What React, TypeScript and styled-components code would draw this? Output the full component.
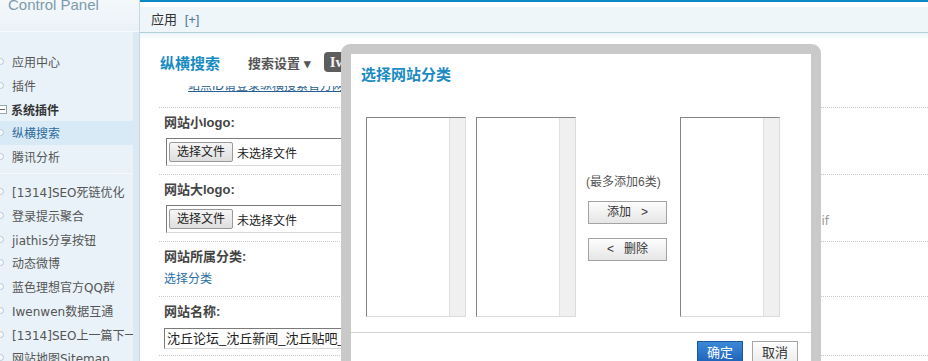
import React from 'react'
import styled, { createGlobalStyle } from 'styled-components'

type NavEntry = {
  label: string
  kind?: 'dot' | 'group'
  active?: boolean
}

const topNav: NavEntry[] = [
  { label: '应用中心' },
  { label: '插件' },
  { label: '系统插件', kind: 'group' },
  { label: '纵横搜索', active: true },
  { label: '腾讯分析' },
]

const pluginNav: NavEntry[] = [
  { label: '[1314]SEO死链优化' },
  { label: '登录提示聚合' },
  { label: 'jiathis分享按钮' },
  { label: '动态微博' },
  { label: '蓝色理想官方QQ群' },
  { label: 'Iwenwen数据互通' },
  { label: '[1314]SEO上一篇下一篇' },
  { label: '网站地图Sitemap' },
]

const NavRow: React.FC<{ entry: NavEntry }> = ({ entry }) => (
  <NavItem $active={entry.active} $bold={entry.kind === 'group'}>
    {entry.kind === 'group' ? <GroupIcon /> : <Dot />}
    {entry.label}
  </NavItem>
)

const FileField: React.FC = () => (
  <FileBox>
    <PickButton>选择文件</PickButton>
    <FileName>未选择文件</FileName>
  </FileBox>
)

export default function App() {
  return (
    <>
      <GlobalStyle />
      <Page>
        <Sidebar>
          <SideHead>
            <Brand>Control Panel</Brand>
          </SideHead>
          <SideBody>
            {topNav.map((n) => (
              <NavRow key={n.label} entry={n} />
            ))}
            <NavSeparator />
            {pluginNav.map((n) => (
              <NavRow key={n.label} entry={n} />
            ))}
          </SideBody>
        </Sidebar>

        <Main>
          <TopBar>
            <TabStrip>
              应用 <AddLink>[+]</AddLink>
            </TabStrip>
          </TopBar>
          <Content>
            <TitleRow>
              <PageTitle>纵横搜索</PageTitle>
              <MenuLabel>搜索设置 ▾</MenuLabel>
              <DarkTab>Iwenwen数据互通</DarkTab>
            </TitleRow>
            <Form>
              <ClipSection>
                <Clip>
                  <HelpLink>站点ID请登录纵横搜索官方网站注册后获取并填写</HelpLink>
                </Clip>
              </ClipSection>

              <Row>
                <Label>网站小logo:</Label>
                <FieldLine $gap={6}>
                  <FileField />
                </FieldLine>
              </Row>

              <Row>
                <Label>网站大logo:</Label>
                <FieldLine $gap={6}>
                  <FileField />
                  <Hint>图片格式支持 jpg, png, gif</Hint>
                </FieldLine>
              </Row>

              <Row>
                <Label>网站所属分类:</Label>
                <FieldLine $gap={4}>
                  <PlainLink>选择分类</PlainLink>
                </FieldLine>
              </Row>

              <Row $pb={6}>
                <Label>网站名称:</Label>
                <FieldLine $gap={7}>
                  <TextBox>沈丘论坛_沈丘新闻_沈丘贴吧_沈丘信息网</TextBox>
                </FieldLine>
              </Row>
            </Form>
          </Content>
        </Main>

        <Dialog>
          <DialogTitle>选择网站分类</DialogTitle>
          <DialogBody>
            <ListBox />
            <ListBox $gap={10} />
            <MidCol>
              <MidHint>(最多添加6类)</MidHint>
              <MoveButton $top={10}>{'添加   >'}</MoveButton>
              <MoveButton $top={14}>{'<   删除'}</MoveButton>
            </MidCol>
            <ListBox />
          </DialogBody>
          <DialogFooter>
            <FootButton $primary>确定</FootButton>
            <FootButton>取消</FootButton>
          </DialogFooter>
        </Dialog>
      </Page>
    </>
  )
}

const GlobalStyle = createGlobalStyle`
  html, body {
    margin: 0;
    padding: 0;
    background: #fff;
  }
  body {
    font-family: "Liberation Sans", "Noto Sans CJK SC", sans-serif;
    font-size: 12px;
    color: #333;
  }
`

const Page = styled.div({
  position: 'relative',
  display: 'flex',
  width: '100%',
  height: '361px',
  overflow: 'hidden',
})

/* sidebar */

const Sidebar = styled.aside({
  width: '140px',
  flexShrink: 0,
  display: 'flex',
  flexDirection: 'column',
  borderRight: '1px solid #c7d9e5',
  boxSizing: 'border-box',
  background: '#e9f2f9',
})

const SideHead = styled.div({
  flexShrink: 0,
  height: '31px',
  borderBottom: '1px solid #f8fbfd',
  background: 'linear-gradient(#f4f8fb, #ebf2f7)',
  overflow: 'hidden',
})

const Brand = styled.div({
  marginTop: '-3px',
  paddingLeft: '8px',
  fontSize: '15px',
  lineHeight: '15px',
  color: '#7d9bad',
})

const SideBody = styled.nav({
  flex: 1,
  minHeight: 0,
  paddingTop: '18px',
  borderRight: '6px solid #dce9f3',
})

const NavItem = styled.div<{ $active?: boolean; $bold?: boolean }>((p) => ({
  display: 'flex',
  alignItems: 'center',
  height: '23.7px',
  flexShrink: 0,
  whiteSpace: 'nowrap',
  overflow: 'hidden',
  fontFamily: '"DejaVu Sans", "Noto Sans CJK SC", sans-serif',
  fontSize: '12px',
  fontWeight: p.$bold ? 'bold' : 'normal',
  color: p.$active ? '#2d6b9c' : p.$bold ? '#333' : '#555',
  background: p.$active ? '#d9eaf7' : 'transparent',
}))

const Dot = styled.span({
  flexShrink: 0,
  width: '5px',
  height: '5px',
  marginLeft: '-3px',
  marginRight: '8px',
  borderRadius: '50%',
  border: '1px solid #b9c9d5',
  background: '#f4f8fb',
})

const GroupIcon = styled.span({
  position: 'relative',
  flexShrink: 0,
  width: '7px',
  height: '7px',
  marginLeft: '-2px',
  marginRight: '4px',
  border: '1px solid #9aa6ae',
  background: '#fff',
  '&::after': {
    content: '""',
    position: 'absolute',
    left: '1px',
    right: '1px',
    top: '3px',
    height: '1px',
    background: '#666',
  },
})

const NavSeparator = styled.div({
  height: '1px',
  margin: '5px 0 5.6px',
  background: '#f5f9fc',
})

/* main area */

const Main = styled.main({
  flex: 1,
  display: 'flex',
  flexDirection: 'column',
  minWidth: 0,
})

const TopBar = styled.header({
  flexShrink: 0,
  borderTop: '2px solid #0b8bc3',
  paddingTop: '5px',
  background: '#fff',
})

const TabStrip = styled.div({
  height: '25px',
  lineHeight: '25px',
  paddingLeft: '11px',
  background: '#eef6f9',
  borderBottom: '1px solid #b0cfd9',
  fontSize: '13px',
  color: '#333',
})

const AddLink = styled.span({
  marginLeft: '4px',
  color: '#4d76a0',
})

const Content = styled.section({
  flex: 1,
  minHeight: 0,
  padding: '19px 0 0 20px',
  background: 'linear-gradient(#edf5f9, #fff 8px) no-repeat',
})

const TitleRow = styled.div({
  display: 'flex',
  alignItems: 'center',
  height: '20px',
  whiteSpace: 'nowrap',
})

const PageTitle = styled.h1({
  margin: '0 28px 0 0',
  fontSize: '15px',
  fontWeight: 'bold',
  color: '#1a8cc2',
})

const MenuLabel = styled.span({
  marginRight: '13px',
  fontSize: '13px',
  fontWeight: 'bold',
  color: '#555',
})

const DarkTab = styled.span({
  height: '20px',
  lineHeight: '20px',
  padding: '0 6px',
  borderRadius: '4px',
  background: '#5d5d5d',
  color: '#f1f1f1',
  fontFamily: '"Liberation Serif", "Noto Sans CJK SC", serif',
  fontSize: '15px',
  fontWeight: 'bold',
})

const Form = styled.div({
  marginLeft: '-1px',
})

const ClipSection = styled.div({
  marginTop: '14px',
  paddingLeft: '29px',
  paddingBottom: '13px',
  borderBottom: '1px dotted #c8c8c8',
})

const Clip = styled.div({
  height: '8px',
  overflow: 'hidden',
})

const HelpLink = styled.a({
  display: 'block',
  marginTop: '-7px',
  lineHeight: '15px',
  fontSize: '12px',
  color: '#2a5f96',
  textDecoration: 'underline',
  whiteSpace: 'nowrap',
})

const Row = styled.div<{ $pb?: number }>((p) => ({
  padding: `6px 0 ${p.$pb ?? 8}px 5px`,
  borderBottom: '1px dotted #c8c8c8',
}))

const Label = styled.div({
  lineHeight: '18px',
  fontSize: '13px',
  fontWeight: 'bold',
  color: '#444',
})

const FieldLine = styled.div<{ $gap: number }>((p) => ({
  display: 'flex',
  alignItems: 'center',
  marginTop: `${p.$gap}px`,
  whiteSpace: 'nowrap',
}))

const FileBox = styled.div({
  display: 'flex',
  alignItems: 'center',
  gap: '4px',
  width: '400px',
  height: '28px',
  marginLeft: '2px',
  paddingLeft: '2px',
  boxSizing: 'border-box',
  border: '1px solid',
  borderColor: '#7a7a7a #d8d8d8 #d8d8d8 #7a7a7a',
  background: '#fff',
})

const PickButton = styled.span({
  height: '18px',
  lineHeight: '18px',
  padding: '0 7px',
  border: '1px solid #9a9a9a',
  borderRadius: '2px',
  background: 'linear-gradient(#f6f6f6, #dedede)',
  fontSize: '12px',
  color: '#222',
})

const FileName = styled.span({
  fontSize: '12px',
  color: '#222',
})

const Hint = styled.span({
  width: '251px',
  marginLeft: '12px',
  textAlign: 'right',
  fontFamily: '"DejaVu Sans", "Noto Sans CJK SC", sans-serif',
  fontSize: '12px',
  color: '#9a9a9a',
})

const PlainLink = styled.a({
  lineHeight: '18px',
  fontSize: '12px',
  color: '#2b6fa5',
})

const TextBox = styled.div({
  width: '420px',
  height: '21px',
  lineHeight: '19px',
  paddingLeft: '2px',
  boxSizing: 'border-box',
  border: '1px solid',
  borderColor: '#7a7a7a #d8d8d8 #d8d8d8 #7a7a7a',
  fontSize: '13px',
  color: '#222',
  overflow: 'hidden',
})

/* dialog */

const Dialog = styled.div({
  position: 'absolute',
  left: '341px',
  top: '44px',
  width: '480px',
  height: '340px',
  boxSizing: 'border-box',
  border: '10px solid #c9c9c9',
  borderRadius: '9px',
  background: '#fff',
})

const DialogTitle = styled.h2({
  margin: 0,
  padding: '11px 0 0 10px',
  lineHeight: '20px',
  fontSize: '15px',
  fontWeight: 'bold',
  color: '#1a8cc2',
})

const DialogBody = styled.div({
  display: 'flex',
  padding: '32px 0 0 15px',
})

const ListBox = styled.div<{ $gap?: number }>((p) => ({
  display: 'flex',
  justifyContent: 'flex-end',
  width: '100px',
  height: '200px',
  marginLeft: `${p.$gap ?? 0}px`,
  boxSizing: 'border-box',
  border: '1px solid',
  borderColor: '#858585 #dcdcdc #dcdcdc #858585',
  background: '#fff',
  '&::after': {
    content: '""',
    width: '15px',
    borderLeft: '1px solid #e0e0e0',
    background: '#f0f0f0',
  },
}))

const MidCol = styled.div({
  display: 'flex',
  flexDirection: 'column',
  alignItems: 'flex-start',
  width: '104px',
  boxSizing: 'border-box',
  padding: '56px 0 0 12px',
})

const MidHint = styled.div({
  marginLeft: '-2px',
  lineHeight: '18px',
  fontSize: '12px',
  color: '#555',
  whiteSpace: 'nowrap',
})

const MoveButton = styled.div<{ $top: number }>((p) => ({
  width: '79px',
  height: '23px',
  lineHeight: '21px',
  marginTop: `${p.$top}px`,
  boxSizing: 'border-box',
  border: '1px solid #a3a3a3',
  background: 'linear-gradient(#fdfdfd, #e6e6e6)',
  textAlign: 'center',
  whiteSpace: 'pre',
  fontSize: '12px',
  color: '#333',
}))

const DialogFooter = styled.div({
  display: 'flex',
  justifyContent: 'flex-end',
  gap: '9px',
  marginTop: '15px',
  padding: '8px 13px 0 0',
  borderTop: '1px solid #d2d2d2',
})

const FootButton = styled.div<{ $primary?: boolean }>((p) => ({
  width: '46px',
  height: '24px',
  lineHeight: '22px',
  boxSizing: 'border-box',
  textAlign: 'center',
  fontSize: '13px',
  border: p.$primary ? '1px solid #1b58a2' : '1px solid #a5a5a5',
  background: p.$primary ? 'linear-gradient(#3b89d7, #1d60b6)' : 'linear-gradient(#fefefe, #ebebeb)',
  color: p.$primary ? '#fff' : '#333',
}))
